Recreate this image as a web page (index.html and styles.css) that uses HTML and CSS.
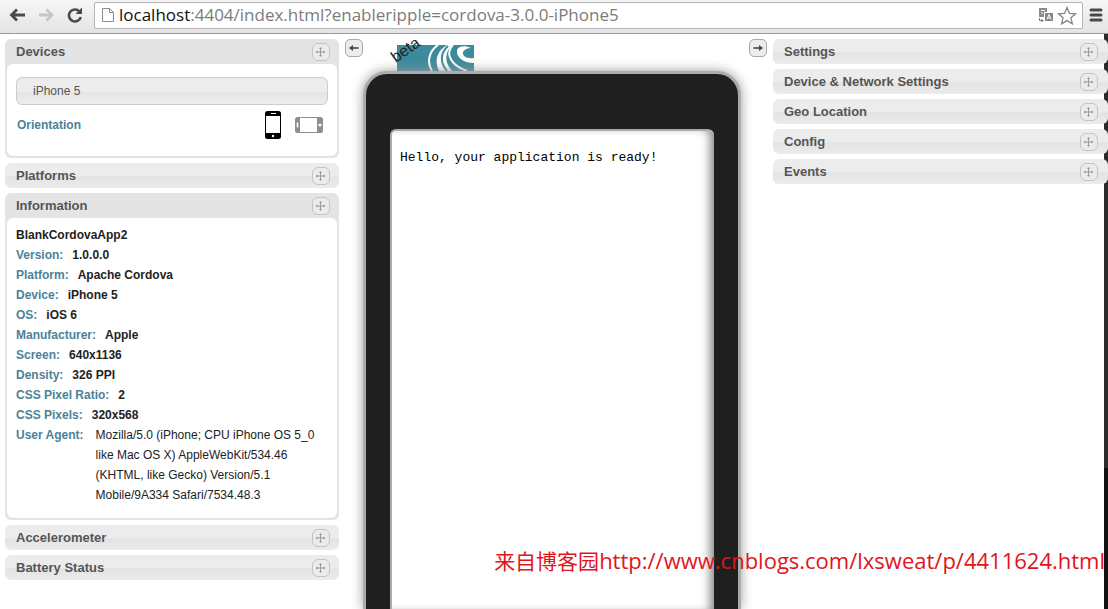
FILE: index.html
```html
<!DOCTYPE html>
<html lang="en">
<head>
<meta charset="utf-8">
<meta name="viewport" content="width=device-width, initial-scale=1">
<title>Ripple Emulator</title>
<link rel="stylesheet" href="styles.css">
</head>
<body>
<svg class="sprite" aria-hidden="true">
  <symbol id="move" viewBox="0 0 18 18">
    <path d="M8.500 5v8M4.500 9h8" stroke="#999" stroke-width="1" fill="none"/>
    <path d="M8.500 4l1.500 2H7zM8.500 14l1.500-2H7zM3.500 9l2-1.500v3zM13.500 9l-2-1.500v3z" fill="#999"/>
  </symbol>
</svg>
<header class="toolbar">
  <button class="tool" aria-label="Back"><svg width="18" height="16" viewBox="0 0 18 16"><path d="M17 8H4M9 2.500L3.500 8 9 13.500" fill="none" stroke="#4a4a4a" stroke-width="2.800"/></svg></button>
  <button class="tool" aria-label="Forward"><svg width="18" height="16" viewBox="0 0 18 16"><path d="M2 8h13M9.500 2.500L15 8l-5.500 5.500" fill="none" stroke="#c6c6c6" stroke-width="2.800"/></svg></button>
  <button class="tool" aria-label="Reload"><svg width="18" height="16" viewBox="0 0 18 16"><path d="M13.500 4.500A6 6 0 1 0 14.800 10" fill="none" stroke="#4a4a4a" stroke-width="2.600"/><path d="M16 .5v6.500H9.500z" fill="#4a4a4a"/></svg></button>
  <div class="address">
    <svg width="14" height="16" viewBox="0 0 14 16"><path d="M1.500 1.500h7l4 4v9h-11zM8.500 1.500v4h4" fill="#fff" stroke="#8a8a8a"/></svg>
    <div class="url"><b>localhost</b>:4404/index.html?enableripple=cordova-3.0.0-iPhone5</div>
    <button class="tool-small" aria-label="Translate"><svg width="14" height="14" viewBox="0 0 14 14"><path d="M0 0h8v4H5v5H0z" fill="#8c8c8c"/><path d="M2 2.500h4M2 5h2" stroke="#fff"/><path d="M6 5h8v8H6z" fill="#858585"/><path d="M8 11.500l2-5 2 5M8.700 10h2.600" fill="none" stroke="#fff"/><path d="M.5 10v2.500H4M2.500 11l1.500 1.500L2.500 14" fill="none" stroke="#777"/></svg></button>
    <button class="tool-small" aria-label="Bookmark"><svg width="20" height="19" viewBox="0 0 20 19"><path d="M10 1.500l2.400 5.800 6.200.5-4.700 4 1.500 6.100-5.400-3.300-5.400 3.300 1.500-6.100-4.700-4 6.200-.5z" fill="#fff" stroke="#858585" stroke-width="1.300"/></svg></button>
  </div>
  <button class="tool menu" aria-label="Menu"><svg width="14" height="14" viewBox="0 0 14 14"><path d="M2 2h10M2 7h10M2 12h10" stroke="#4a4a4a" stroke-width="3" stroke-linecap="round"/></svg></button>
</header>
<main class="page">
  <aside class="column left">
    <section class="panel open">
      <h2 class="bar">Devices<button class="grip" aria-label="Move Devices"><svg><use href="#move"/></svg></button></h2>
      <div class="body devices">
        <select class="device" aria-label="Device"><option>iPhone 5</option></select>
        <div class="orientation"><span>Orientation</span>
          <button class="tool-small" aria-label="Portrait"><svg width="16" height="28" viewBox="0 0 16 28"><rect width="16" height="28" rx="2.500"/><rect x="1" y="5" width="14" height="17" fill="#fff"/><path d="M6 2.500h5" stroke="#fff"/><circle cx="8" cy="25" r="1.200" fill="#fff"/></svg></button>
          <button class="tool-small" aria-label="Landscape"><svg width="28" height="16" viewBox="0 0 28 16"><rect width="28" height="16" rx="2.500" fill="#8e8e8e"/><rect x="5" y="1" width="17" height="14" fill="#fff"/><path d="M2.500 5.500v5" stroke="#fff" stroke-width="1.500"/><circle cx="25" cy="8" r="1.600" fill="#fff"/></svg></button>
        </div>
      </div>
    </section>
    <section class="panel"><h2 class="bar">Platforms<button class="grip" aria-label="Move Platforms"><svg><use href="#move"/></svg></button></h2></section>
    <section class="panel open">
      <h2 class="bar">Information<button class="grip" aria-label="Move Information"><svg><use href="#move"/></svg></button></h2>
      <div class="body info">
        <h3>BlankCordovaApp2</h3>
        <dl>
          <div><dt>Version:</dt><dd>1.0.0.0</dd></div>
          <div><dt>Platform:</dt><dd>Apache Cordova</dd></div>
          <div><dt>Device:</dt><dd>iPhone 5</dd></div>
          <div><dt>OS:</dt><dd>iOS 6</dd></div>
          <div><dt>Manufacturer:</dt><dd>Apple</dd></div>
          <div><dt>Screen:</dt><dd>640x1136</dd></div>
          <div><dt>Density:</dt><dd>326 PPI</dd></div>
          <div><dt>CSS Pixel Ratio:</dt><dd>2</dd></div>
          <div><dt>CSS Pixels:</dt><dd>320x568</dd></div>
          <div class="agent"><dt>User Agent:</dt><dd>Mozilla/5.0 (iPhone; CPU iPhone OS 5_0 like Mac OS X) AppleWebKit/534.46 (KHTML, like Gecko) Version/5.1 Mobile/9A334 Safari/7534.48.3</dd></div>
        </dl>
      </div>
    </section>
    <section class="panel"><h2 class="bar">Accelerometer<button class="grip" aria-label="Move Accelerometer"><svg><use href="#move"/></svg></button></h2></section>
    <section class="panel"><h2 class="bar">Battery Status<button class="grip" aria-label="Move Battery Status"><svg><use href="#move"/></svg></button></h2></section>
  </aside>
  <button class="arrow hide-left" aria-label="Hide left column"><svg width="10" height="8" viewBox="0 0 10 8"><path d="M9.500 4H2" stroke="#444" stroke-width="1.600"/><path d="M0 4l4-3v6z" fill="#444"/></svg></button>
  <div class="stage">
    <div class="brand">
      <svg width="77" height="26" viewBox="0 0 77 26"><path d="M0 0h77v26H0z" fill="#3c8a9c"/><path d="M41 0C31 7 30 18 35 26" fill="none" stroke="#fff" stroke-width="2"/><path d="M50 0h5c-7 7-8 17 0 26H42C37 15 40 6 50 0z" fill="#fff"/><path d="M51 1C43 8 43 18 50 26" fill="none" stroke="#3c8a9c" stroke-width="2"/><path d="M56 0C48 8 53 20 70 26" fill="none" stroke="#fff" stroke-width="2"/><path d="M74 3C68 0 61 1 60 5c-1 7 6 13 17 13v-5c-7 1-12-2-11-6 1-2 4-4 8-4z" fill="#fff"/></svg>
      <span class="beta">beta</span>
    </div>
    <div class="phone"><div class="screen">Hello, your application is ready!</div></div>
  </div>
  <button class="arrow hide-right" aria-label="Hide right column"><svg width="10" height="8" viewBox="0 0 10 8"><path d="M.5 4H8" stroke="#444" stroke-width="1.600"/><path d="M10 4L6 1v6z" fill="#444"/></svg></button>
  <aside class="column right">
    <section class="panel"><h2 class="bar">Settings<button class="grip" aria-label="Move Settings"><svg><use href="#move"/></svg></button></h2></section>
    <section class="panel"><h2 class="bar">Device &amp; Network Settings<button class="grip" aria-label="Move Device and Network Settings"><svg><use href="#move"/></svg></button></h2></section>
    <section class="panel"><h2 class="bar">Geo Location<button class="grip" aria-label="Move Geo Location"><svg><use href="#move"/></svg></button></h2></section>
    <section class="panel"><h2 class="bar">Config<button class="grip" aria-label="Move Config"><svg><use href="#move"/></svg></button></h2></section>
    <section class="panel"><h2 class="bar">Events<button class="grip" aria-label="Move Events"><svg><use href="#move"/></svg></button></h2></section>
  </aside>
</main>
<div class="watermark"><span lang="zh">来自博客园</span>http://www.cnblogs.com/lxsweat/p/4411624.html</div>
</body>
</html>
```

FILE: styles.css
```css
* { box-sizing: border-box; }
body {
  margin: 0;
  height: 100vh;
  display: flex;
  flex-direction: column;
  background: #fff;
  font-family: "Liberation Sans", Arial, sans-serif;
  font-size: 12px;
  line-height: 20px;
  color: #222;
}
button { border: 0; padding: 0; margin: 0; background: none; display: flex; align-items: center; justify-content: center; }
.sprite { position: absolute; width: 0; height: 0; }

.toolbar {
  position: relative;
  display: flex;
  align-items: center;
  gap: 11px;
  height: 34px;
  flex: none;
  padding: 0 5px 3px 8px;
  background: linear-gradient(#f6f6f6, #e4e4e4);
  border-bottom: 1px solid #999;
}
.tool { width: 18px; height: 18px; flex: none; }
.menu { width: 14px; margin-left: -5px; }
.address {
  flex: 1;
  display: flex;
  align-items: center;
  gap: 4px;
  height: 27px;
  margin-left: -1px;
  padding: 0 5px 0 6px;
  background: #fff;
  border: 1px solid #b4b4b4;
  border-radius: 2px;
}
.url {
  flex: 1;
  font-family: "Open Sans", sans-serif;
  font-size: 17px;
  white-space: nowrap;
  color: #7c7c7c;
}
.url b { font-weight: 400; color: #111; }

.page { flex: 1; min-height: 0; display: flex; overflow: hidden; padding: 5px 0 0 5px; }
.column { width: 334px; flex: none; display: flex; flex-direction: column; gap: 5px; }
.right {
  width: 335px;
  background: linear-gradient(#2b2b2b 434px, #111 434px) right top / 4px 100% no-repeat;
  margin-top: -5px;
  padding-top: 5px;
}
.right .bar { padding-right: 10px; }
.panel { border-radius: 6px; background: linear-gradient(#ececec 50%, #e3e3e3 56%, #ececec); flex: none; }
.open { padding: 0 2px 2px; background: #e4e4e4; }
.open .bar { padding-left: 9px; padding-right: 7px; }
.bar {
  display: flex;
  align-items: center;
  justify-content: space-between;
  height: 25px;
  margin: 0;
  padding: 0 9px 0 11px;
  font-size: 13px;
  font-weight: 700;
  color: #555;
}
.grip { width: 18px; height: 18px; border: 1px solid #c4c4c4; border-radius: 6px; background: #ebebeb; }
.grip svg { width: 18px; height: 18px; flex: none; }
.body { background: #fff; border-radius: 6px; padding: 7px 9px 13px; }
.devices { padding: 13px 9px 17px; }
.device {
  appearance: none;
  display: block;
  width: 100%;
  height: 28px;
  padding: 0 16px;
  border: 1px solid #ccc;
  border-radius: 6px;
  background: linear-gradient(#ececec 50%, #e5e5e5 56%, #eee);
  font: 12px "Liberation Sans", Arial, sans-serif;
  color: #555;
}
.orientation { display: flex; align-items: center; gap: 14px; padding: 6px 5px 0 1px; font-weight: 700; color: #4b8299; }
.orientation span { flex: 1; }
.info h3 { margin: 0; font-size: 12px; line-height: 20px; }
.info dl { margin: 0; }
.info dl div { display: flex; gap: 9px; }
.info dt { font-weight: 700; color: #4b8299; flex: none; }
.info dd { margin: 0; font-weight: 700; }
.info .agent { gap: 12px; }
.info .agent dd { font-weight: 400; }

.arrow { width: 18px; height: 18px; flex: none; border: 1px solid #aaa; border-radius: 5px; background: #ececec; }
.hide-left { margin-left: 6px; }
.hide-right { margin: 0 6px 0 8px; }
.stage { flex: 1; min-width: 0; display: flex; flex-direction: column; }
.brand { position: relative; flex: none; height: 32px; padding: 6px 0 0 34px; }
.brand svg { display: block; }
.beta { position: absolute; left: 27px; top: 1px; font-size: 16px; transform: rotate(-35deg); }
.phone {
  position: relative;
  flex: 1;
  display: flex;
  width: 100%;
  max-width: 378px;
  margin: 0 auto;
  padding: 55px 24px 0;
  background: #1f1f1f;
  border: 3px solid #a8adab;
  border-bottom: 0;
  border-radius: 24px 24px 0 0;
  box-shadow: 0 0 12px #999;
}
.screen {
  flex: 1;
  padding: 17px 8px;
  background: #fff;
  border: 2px solid #aaa;
  border-width: 2px 0 0 2px;
  border-radius: 6px 6px 0 0;
  box-shadow: inset -8px 0 10px -4px #888;
  font-family: "Liberation Mono", monospace;
  font-size: 13px;
  color: #000;
}
.watermark {
  position: absolute;
  right: 3px;
  bottom: 33px;
  font-family: "Open Sans", "Noto Sans CJK SC", sans-serif;
  font-size: 22px;
  line-height: 30px;
  white-space: nowrap;
  color: #e1141c;
}
.watermark span { font-size: 21px; }
```
